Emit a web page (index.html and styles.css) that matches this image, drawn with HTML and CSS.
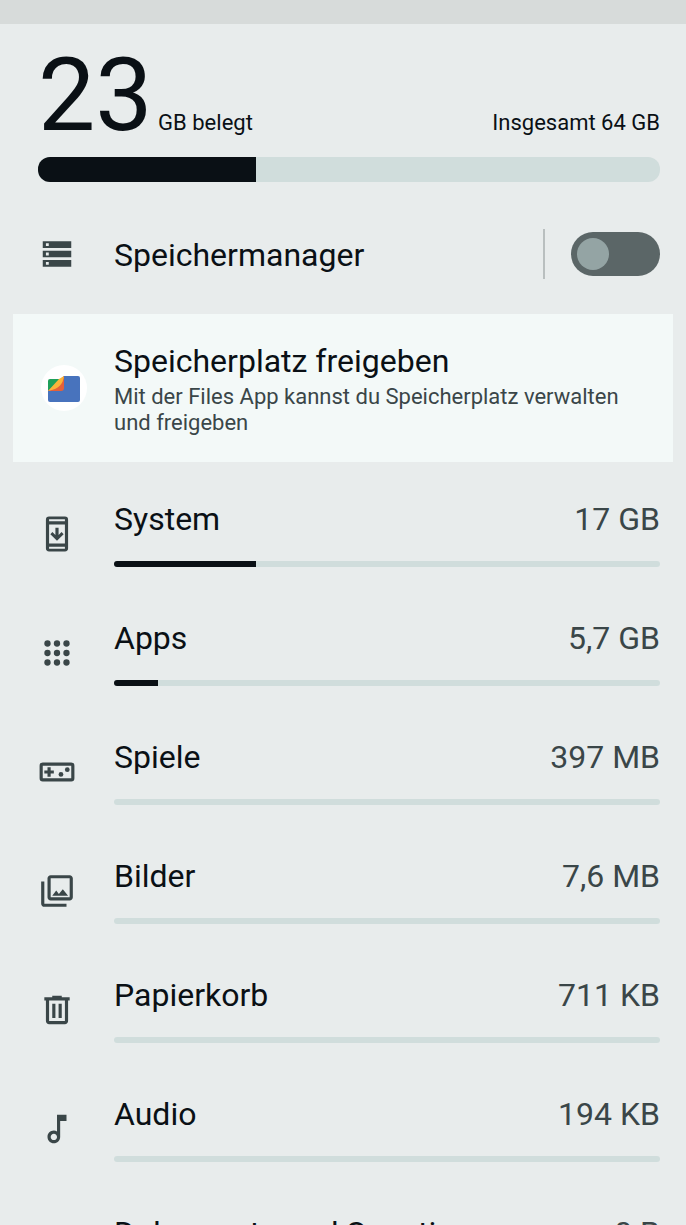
FILE: index.html
```html
<!DOCTYPE html>
<html lang="de">
	<head>
		<meta charset="utf-8">
		<meta name="viewport" content="width=device-width, initial-scale=1">
		<title>Speicher</title>
		<link rel="stylesheet" href="styles.css">
	</head>
	<body>
		<div class="statusbar"></div>
		<main class="page">
			<!-- total usage -->
			<section class="summary">
				<div class="summary_hd">
					<p class="used"><span class="num">23</span> GB belegt</p>
					<p class="total">Insgesamt 64 GB</p>
				</div>
				<div class="bar bar_big"><div class="fill" style="width: 35%"></div></div>
			</section>

			<div class="manager">
				<svg class="icon" viewBox="0 0 24 24">
					<path fill-rule="evenodd" d="M3 4h18v4.2H3zM5 5.200v1.800h1.800V5.200zM3 10h18v4H3zM5 11.100v1.800h1.800v-1.800zM3 15.800h18V20H3zM5 17v1.800h1.800V17z"/>
				</svg>
				<label class="name" for="manager">Speichermanager</label>
				<span class="line"></span>
				<input class="switch" type="checkbox" role="switch" id="manager">
			</div>

			<!-- Files card -->
			<section class="card">
				<svg class="files" viewBox="0 0 46 46">
					<circle cx="23" cy="23" r="23" fill="#fff"/>
					<path d="M9 14H20L7 28V16a2 2 0 0 1 2-2z" fill="#1fa05a"/>
					<path d="M23 11H37a2 2 0 0 1 2 2V35a2 2 0 0 1-2 2H9a2 2 0 0 1-2-2V26z" fill="#4873bd"/>
					<path d="M23 11V23a3 3 0 0 1-3 3H7z" fill="#e5603a"/>
					<path d="M23 11C22 19 18 24 7 26L18 14z" fill="#fbb43a"/>
				</svg>
				<div class="card_bd">
					<h2 class="name">Speicherplatz freigeben</h2>
					<p class="desc">Mit der Files App kannst du Speicherplatz verwalten und freigeben</p>
				</div>
			</section>

			<!-- categories -->
			<ul class="list">
				<li class="item">
					<svg class="icon" viewBox="0 0 24 24">
						<path fill-rule="evenodd" d="M7 1h10a2 2 0 0 1 2 2v18a2 2 0 0 1-2 2H7a2 2 0 0 1-2-2V3a2 2 0 0 1 2-2zM7 2.700v1.300h10V2.700zM7 6v12h10V6zM7 20v1.300h10V20z"/>
						<path d="M11 8h2v4.700l1.900-1.900 1.300 1.400L12 16.300l-4.200-4.100 1.300-1.400 1.900 1.900z"/>
					</svg>
					<div class="item_bd">
						<div class="text"><span class="name">System</span><span class="size">17 GB</span></div>
						<div class="bar"><div class="fill" style="width: 26%"></div></div>
					</div>
				</li>
				<li class="item">
					<svg class="icon" viewBox="0 0 24 24">
						<circle cx="6" cy="6" r="2"/><circle cx="12" cy="6" r="2"/><circle cx="18" cy="6" r="2"/>
						<circle cx="6" cy="12" r="2"/><circle cx="12" cy="12" r="2"/><circle cx="18" cy="12" r="2"/>
						<circle cx="6" cy="18" r="2"/><circle cx="12" cy="18" r="2"/><circle cx="18" cy="18" r="2"/>
					</svg>
					<div class="item_bd">
						<div class="text"><span class="name">Apps</span><span class="size">5,7 GB</span></div>
						<div class="bar"><div class="fill" style="width: 8%"></div></div>
					</div>
				</li>
				<li class="item">
					<svg class="icon" viewBox="0 0 24 24">
						<path fill-rule="evenodd" d="M3 6h18a2 2 0 0 1 2 2v8a2 2 0 0 1-2 2H3a2 2 0 0 1-2-2V8a2 2 0 0 1 2-2zM3 8v8h18V8z"/>
						<path d="M6 9h2v2h2v2H8v2H6v-2H4v-2h2z"/>
						<circle cx="14.500" cy="13.500" r="1.500"/><circle cx="18.500" cy="10.500" r="1.500"/>
					</svg>
					<div class="item_bd">
						<div class="text"><span class="name">Spiele</span><span class="size">397 MB</span></div>
						<div class="bar"></div>
					</div>
				</li>
				<li class="item">
					<svg class="icon" viewBox="0 0 24 24">
						<path d="M20 4v12H8V4h12m0-2H8c-1.100 0-2 .9-2 2v12c0 1.100.9 2 2 2h12c1.100 0 2-.9 2-2V4c0-1.100-.9-2-2-2zm-8.500 9.670l1.690 2.260 2.480-3.100L19 15H9zM2 6v14c0 1.100.9 2 2 2h14v-2H4V6H2z"/>
					</svg>
					<div class="item_bd">
						<div class="text"><span class="name">Bilder</span><span class="size">7,6 MB</span></div>
						<div class="bar"></div>
					</div>
				</li>
				<li class="item">
					<svg class="icon" viewBox="0 0 24 24">
						<path fill-rule="evenodd" d="M15 4V3H9v1H4v2h1v13c0 1.100.9 2 2 2h10c1.100 0 2-.9 2-2V6h1V4h-5zm2 15H7V6h10v13zM9 8h2v9H9zm4 0h2v9h-2z"/>
					</svg>
					<div class="item_bd">
						<div class="text"><span class="name">Papierkorb</span><span class="size">711 KB</span></div>
						<div class="bar"></div>
					</div>
				</li>
				<li class="item">
					<svg class="icon" viewBox="0 0 24 24">
						<path d="M12 3l.01 10.550c-.59-.34-1.270-.55-2-.55C7.790 13 6 14.790 6 17s1.790 4 4.010 4S14 19.210 14 17V7h4V3h-6zm-1.990 16c-1.100 0-2-.9-2-2s.9-2 2-2 2 .9 2 2-.9 2-2 2z"/>
					</svg>
					<div class="item_bd">
						<div class="text"><span class="name">Audio</span><span class="size">194 KB</span></div>
						<div class="bar"></div>
					</div>
				</li>
				<li class="item">
					<svg class="icon" viewBox="0 0 24 24">
						<path d="M8 16h8v2H8zm0-4h8v2H8zm6-10H6c-1.100 0-2 .9-2 2v16c0 1.100.89 2 1.990 2H18c1.100 0 2-.9 2-2V8l-6-6zm4 18H6V4h7v5h5v11z"/>
					</svg>
					<div class="item_bd">
						<div class="text"><span class="name">Dokumente und Sonstiges</span><span class="size">0 B</span></div>
						<div class="bar"></div>
					</div>
				</li>
			</ul>
		</main>
	</body>
</html>
```
FILE: styles.css
```css
*{
	margin: 0;
	padding: 0;
	box-sizing: border-box;
}
body{
	display: flex;
	flex-direction: column;
	height: 100vh;
	background-color: #e8ecec;
	color: #0a1015;
	font-family: Roboto, "Liberation Sans", sans-serif;
}
.statusbar{
	flex: none;
	height: 24px;
	background-color: #d7dbda;
}
/* the page scrolls below the status bar */
.page{
	flex: 1;
	min-height: 0;
	overflow-y: auto;
	scrollbar-width: none;
}
.icon{
	flex: none;
	width: 38px;
	height: 38px;
	fill: #3a4648;
}
.name{
	font-size: 32px;
	font-weight: 400;
	line-height: 38px;
}

/* bars */
.bar{
	height: 6px;
	overflow: hidden;
	border-radius: 3px;
	background-color: #d0dddc;
}
.bar_big{
	height: 25px;
	margin-top: 10px;
	border-radius: 12px;
}
.fill{
	height: 100%;
	background-color: #0a1015;
}

.summary{
	padding: 19px 26px 0 38px;
}
.summary_hd{
	display: flex;
	justify-content: space-between;
	align-items: baseline;
	font-size: 22px;
}
.num{
	font-size: 102px;
	line-height: 104px;
}

.manager{
	display: flex;
	align-items: center;
	margin: 47px 0 35px;
	padding: 0 26px 0 38px;
}
.manager .name{
	flex: 1;
	margin-left: 38px;
	padding-top: 2px;
}
.line{
	width: 2px;
	height: 50px;
	margin-right: 26px;
	background-color: #b9bfbf;
}
.switch{
	appearance: none;
	display: flex;
	align-items: center;
	width: 89px;
	height: 44px;
	padding: 0 6px;
	border-radius: 22px;
	background-color: #5b6667;
}
.switch::before{
	content: "";
	width: 32px;
	height: 32px;
	border-radius: 50%;
	background-color: #94a4a4;
}
.switch:checked{
	justify-content: flex-end;
}

.card{
	display: flex;
	align-items: center;
	margin: 0 13px;
	padding: 26px 28px;
	background-color: #f3f9f8;
}
.files{
	flex: none;
	width: 46px;
	height: 46px;
	margin-right: 27px;
}
.card_bd{
	padding-top: 2px;
}
.desc{
	margin-top: 4px;
	color: #3a4648;
	font-size: 22px;
	line-height: 26px;
}

.list{
	display: flex;
	flex-direction: column;
	gap: 52px;
	padding: 38px 26px 38px 38px;
	list-style: none;
}
.item{
	display: flex;
	align-items: center;
	gap: 38px;
}
.item_bd{
	flex: 1;
}
.text{
	display: flex;
	justify-content: space-between;
	margin-bottom: 23px;
}
.size{
	color: #3a4648;
	font-size: 32px;
	line-height: 38px;
}
```
